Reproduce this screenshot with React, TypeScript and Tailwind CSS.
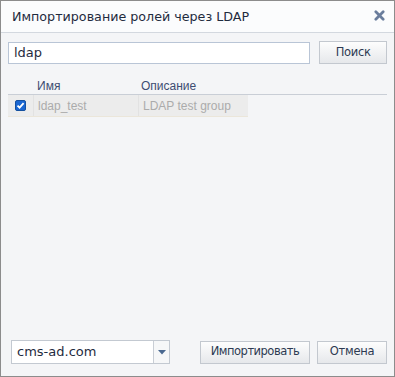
export default function App() {
  return (
    <div className="flex h-[377px] w-[395px] flex-col border border-[#8c8c8c] bg-[#f4f5f7] font-['DejaVu_Sans',sans-serif]">
      <div className="flex h-[32px] items-center justify-between border-b border-[#d3d8df] bg-[#fbfcfd] pl-[11px] pr-[9px]">
        <span className="text-[12.7px] text-[#1f2b3e]">Импортирование ролей через LDAP</span>
        <svg width="11" height="11" viewBox="0 0 12 12" className="mb-[2px]">
          <path d="M2 2 L10 10 M10 2 L2 10" stroke="#6a7d9c" strokeWidth="3" strokeLinecap="round" />
        </svg>
      </div>

      <div className="flex flex-1 flex-col px-[7px] pt-[8px] pb-[12px]">
        <div className="flex items-center gap-[9px]">
          <input
            defaultValue="ldap"
            className="h-[22px] w-[303px] border border-[#b9c5d6] bg-white px-[5px] text-[13px] text-[#1f2b3e] outline-none"
          />
          <button className="h-[23px] w-[68px] border border-[#c3c8cf] bg-gradient-to-b from-[#fdfdfd] to-[#e6e8eb] text-[11.5px] tracking-[-0.3px] text-[#2d3a52]">
            Поиск
          </button>
        </div>

        <div className="mt-[16px] font-['Liberation_Sans',sans-serif] text-[12px]">
          <div className="flex h-[15px] items-center border-b border-[#c9ced6] pb-[2px] text-[#3d4d72]">
            <span className="ml-[29px] w-[104px]">Имя</span>
            <span>Описание</span>
          </div>
          <div className="flex h-[22px] w-[240px] items-stretch border-b border-[#ebe6da] bg-[#ececec] text-[#ababab]">
            <div className="flex w-[25px] items-center justify-center">
              <svg width="11" height="11" viewBox="0 0 11 11">
                <rect x="0.5" y="0.5" width="10" height="10" rx="1.5" fill="#1a66d2" stroke="#14509f" />
                <path d="M2.5 5.6 L4.6 7.7 L8.6 3.2" stroke="white" strokeWidth="1.8" fill="none" />
              </svg>
            </div>
            <div className="flex w-[105px] items-center border-l border-[#e2e2e2] pl-[4px]">ldap_test</div>
            <div className="flex flex-1 items-center border-l border-[#e2e2e2] pl-[4px]">LDAP test group</div>
          </div>
        </div>

        <div className="mt-auto flex items-center">
          <div className="ml-[3px] flex h-[24px] w-[159px] border border-[#c3c9d1] bg-white">
            <div className="flex flex-1 items-center pl-[5px] text-[13px] text-[#1f2b3e]">cms-ad.com</div>
            <div className="flex w-[16px] items-center justify-center border-l border-[#c9ced5] bg-[#f6f7f8]">
              <svg width="8" height="5" viewBox="0 0 8 5">
                <path d="M0 0 L8 0 L4 4.5 Z" fill="#4a6890" />
              </svg>
            </div>
          </div>
          <button className="ml-[30px] h-[23px] w-[110px] border border-[#c3c8cf] bg-gradient-to-b from-[#fdfdfd] to-[#e6e8eb] text-[11.5px] tracking-[-0.5px] text-[#2d3a52]">
            Импортировать
          </button>
          <button className="ml-[7px] h-[23px] w-[70px] border border-[#c3c8cf] bg-gradient-to-b from-[#fdfdfd] to-[#e6e8eb] text-[11.5px] tracking-[-0.3px] text-[#2d3a52]">
            Отмена
          </button>
        </div>
      </div>
    </div>
  );
}
